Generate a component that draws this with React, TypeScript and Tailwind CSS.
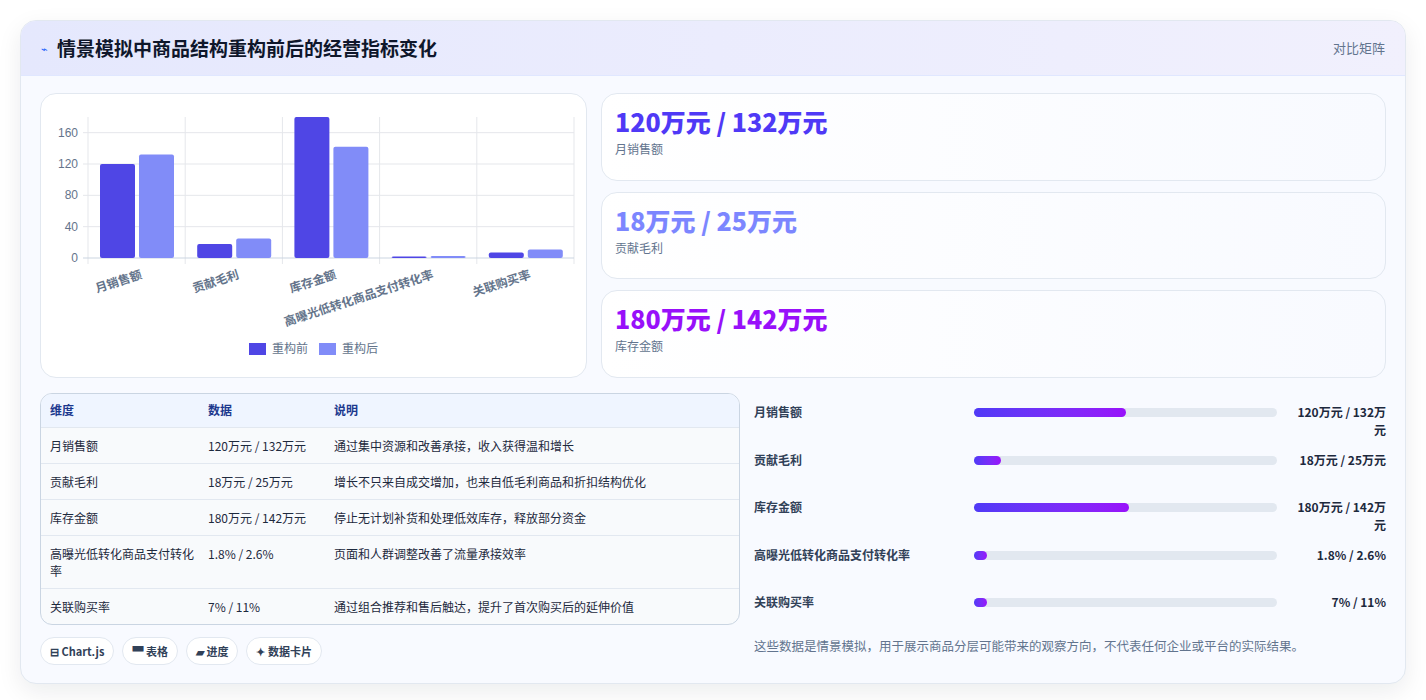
import React from "react";

const font = { fontFamily: '"Noto Sans CJK SC", "Noto Sans", sans-serif' };

const cats = [
  { name: "月销售额", before: 120, after: 132, data: "120万元 / 132万元", note: "通过集中资源和改善承接，收入获得温和增长", fill: 50 },
  { name: "贡献毛利", before: 18, after: 25, data: "18万元 / 25万元", note: "增长不只来自成交增加，也来自低毛利商品和折扣结构优化", fill: 9 },
  { name: "库存金额", before: 180, after: 142, data: "180万元 / 142万元", note: "停止无计划补货和处理低效库存，释放部分资金", fill: 51 },
  { name: "高曝光低转化商品支付转化率", before: 1.8, after: 2.6, data: "1.8% / 2.6%", note: "页面和人群调整改善了流量承接效率", fill: 4 },
  { name: "关联购买率", before: 7, after: 11, data: "7% / 11%", note: "通过组合推荐和售后触达，提升了首次购买后的延伸价值", fill: 4 },
];

// ─── Chart ────────────────────────────────────────────────────────────────────

function BarChart() {
  const L = 47, R = 533, T = 23, B = 164;
  const y = (v: number) => B - (v * (B - T)) / 180;
  const step = (R - L) / 5;
  return (
    <svg width="546" height="284" className="block">
      {[0, 1, 2, 3, 4, 5].map((i) => (
        <line key={i} x1={L + i * step} x2={L + i * step} y1={T} y2={B + 6} stroke="#e5e7eb" />
      ))}
      {[0, 40, 80, 120, 160].map((v) => (
        <g key={v}>
          <line x1={L - 5} x2={R} y1={y(v)} y2={y(v)} stroke={v === 0 ? "#cbd5e1" : "#e5e7eb"} />
          <text x={L - 10} y={y(v) + 4} textAnchor="end" fontSize="12" fill="#64748b" style={{ fontFamily: "Liberation Sans, sans-serif" }}>
            {v}
          </text>
        </g>
      ))}
      {cats.map((c, i) => {
        const x0 = L + i * step + 12;
        return (
          <g key={c.name}>
            <rect x={x0} y={y(c.before)} width={35} height={B - y(c.before)} rx={2} fill="#4f46e5" />
            <rect x={x0 + 39} y={y(c.after)} width={35} height={B - y(c.after)} rx={2} fill="#818cf8" />
            <text
              transform={`translate(${L + i * step + step / 2 + 6} ${B + 20}) rotate(-18)`}
              textAnchor="end"
              fontSize="12"
              fontWeight="600"
              fill="#64748b"
              style={font}
            >
              {c.name}
            </text>
          </g>
        );
      })}
      <rect x={208} y={249} width={17} height={12} fill="#4f46e5" />
      <text x={231} y={259} fontSize="12" fill="#64748b" style={font}>重构前</text>
      <rect x={278} y={249} width={17} height={12} fill="#818cf8" />
      <text x={301} y={259} fontSize="12" fill="#64748b" style={font}>重构后</text>
    </svg>
  );
}

function MetricCard({ value, label, color }: { value: string; label: string; color: string }) {
  return (
    <div className="flex-1 rounded-2xl border border-slate-200 bg-gradient-to-r from-white to-[#f8faff] px-[13px] pt-[10px]">
      <p className={`text-[25px] font-extrabold leading-[34px] ${color}`}>{value}</p>
      <p className="mt-[2px] text-[12px] text-slate-500">{label}</p>
    </div>
  );
}

export default function App() {
  return (
    <div className="min-h-[700px] bg-white p-5 text-slate-800" style={font}>
      <div className="overflow-hidden rounded-2xl border border-slate-200 bg-[#f8faff] shadow-[0_8px_24px_rgba(15,23,42,0.08)]">
        {/* Header */}
        <div className="flex h-[55px] items-center justify-between border-b border-indigo-100 bg-gradient-to-r from-[#e5e8fd] to-[#f1f0fd] pl-5 pr-5">
          <div className="flex items-center gap-[9px]">
            <span className="text-[11px] text-blue-600">⌁</span>
            <h1 className="text-[19px] font-bold text-slate-900">情景模拟中商品结构重构前后的经营指标变化</h1>
          </div>
          <span className="text-[13px] text-slate-500">对比矩阵</span>
        </div>

        <div className="px-[19px] pt-[17px] pb-[18px]">
          {/* Top row */}
          <div className="flex gap-[14px]">
            <div className="h-[285px] w-[547px] shrink-0 rounded-2xl border border-slate-200 bg-white">
              <BarChart />
            </div>
            <div className="flex flex-1 flex-col gap-[11px]">
              <MetricCard value="120万元 / 132万元" label="月销售额" color="text-indigo-600" />
              <MetricCard value="18万元 / 25万元" label="贡献毛利" color="text-indigo-400" />
              <MetricCard value="180万元 / 142万元" label="库存金额" color="text-purple-600" />
            </div>
          </div>

          {/* Bottom row */}
          <div className="mt-[15px] flex gap-[14px]">
            <div className="w-[700px] shrink-0">
              <div className="overflow-hidden rounded-xl border border-slate-300 bg-[#f8fafc]">
                <table className="w-full text-left text-[12px]">
                  <thead>
                    <tr className="border-b border-slate-200 bg-[#eff5ff] text-blue-900">
                      <th className="h-[33px] w-[167px] pl-[9px] font-semibold">维度</th>
                      <th className="w-[126px] font-semibold">数据</th>
                      <th className="font-semibold">说明</th>
                    </tr>
                  </thead>
                  <tbody>
                    {cats.map((c, i) => (
                      <tr key={c.name} className={i < 4 ? "border-b border-slate-200" : ""}>
                        <td className="py-[9px] pl-[9px] pr-2 align-top leading-[17px]">{c.name}</td>
                        <td className="py-[9px] align-top leading-[17px]">{c.data}</td>
                        <td className="py-[9px] align-top leading-[17px]">{c.note}</td>
                      </tr>
                    ))}
                  </tbody>
                </table>
              </div>
              <div className="mt-[12px] flex gap-[8px] text-[11px] font-semibold text-slate-700">
                {["⊟ Chart.js", "▀ 表格", "▰ 进度", "✦ 数据卡片"].map((t) => (
                  <span key={t} className="rounded-full border border-slate-200 bg-white px-[9px] py-[5px]">{t}</span>
                ))}
              </div>
            </div>

            {/* Progress */}
            <div className="flex flex-1 flex-col pt-[10px] text-[12px] font-semibold">
              {cats.map((c) => (
                <div key={c.name} className="flex h-[47.5px] items-start">
                  <span className="w-[220px] shrink-0 text-slate-700">{c.name}</span>
                  <div className="mt-[5px] flex flex-1 items-center">
                    <div className="h-[9px] flex-1 rounded-full bg-slate-200">
                      <div
                        className="h-full min-w-[13px] rounded-full bg-gradient-to-r from-indigo-600 to-purple-600"
                        style={{ width: `${c.fill}%` }}
                      />
                    </div>
                  </div>
                  <span className="ml-[9px] w-[100px] text-right text-slate-800">{c.data}</span>
                </div>
              ))}
              <p className="mt-[-4px] text-[12.5px] font-normal text-slate-500">
                这些数据是情景模拟，用于展示商品分层可能带来的观察方向，不代表任何企业或平台的实际结果。
              </p>
            </div>
          </div>
        </div>
      </div>
    </div>
  );
}
